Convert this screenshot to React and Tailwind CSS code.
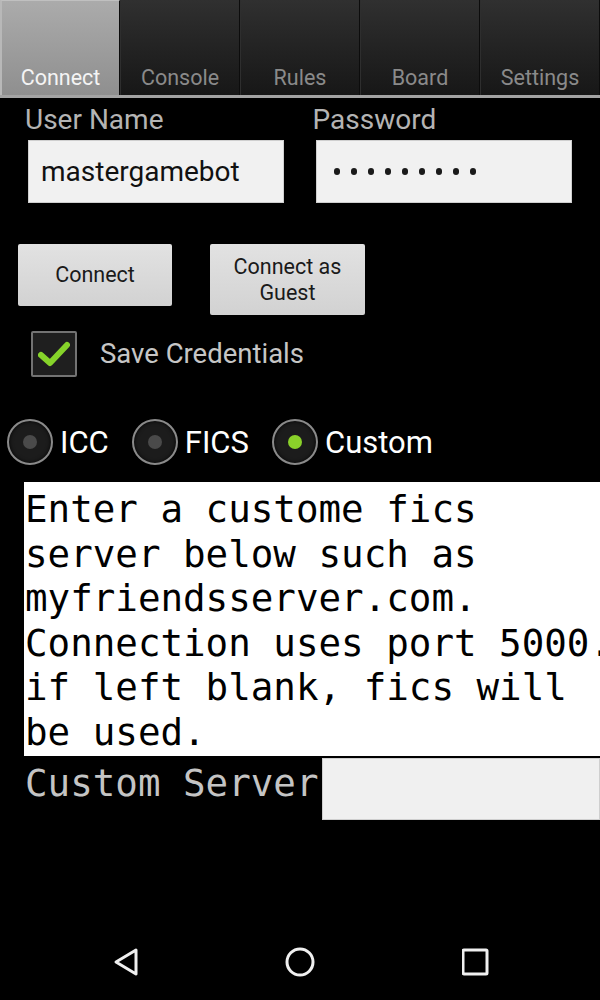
import React from "react";

const sans = { fontFamily: "Roboto, 'Noto Sans', sans-serif" };
const mono = { fontFamily: "'DejaVu Sans Mono', monospace" };

function Tab({ label, active }) {
  return (
    <div
      className={
        "w-[120px] h-[95px] flex items-end justify-center pb-[1px] text-[21.5px] border-r border-[#0c0c0c] " +
        (active
          ? "bg-gradient-to-b from-[#ababab] to-[#8f8f8f] text-[#f4f4f4] border-l-[2px] border-l-[#b8b8b8] border-t border-t-[#c0c0c0]"
          : "bg-gradient-to-b from-[#303030] to-[#171717] text-[#8a8a8a] border-l border-l-[#2e2e2e]")
      }
    >
      {label}
    </div>
  );
}

function Radio({ checked, label, className }) {
  return (
    <div className={"flex items-center " + className}>
      <div className="w-[46px] h-[46px] rounded-full border-[2px] border-[#8a8a8a] bg-[#1c1c1c] flex items-center justify-center shadow-[inset_0_0_4px_rgba(0,0,0,0.9)]">
        <div
          className={
            "w-[14px] h-[14px] rounded-full " +
            (checked ? "bg-[#8ad12a]" : "bg-[#4a4a4a]")
          }
        />
      </div>
      <span className="ml-[7px] text-[31px] text-white leading-none">{label}</span>
    </div>
  );
}

export default function App() {
  return (
    <div className="w-[600px] h-[1000px] bg-black overflow-hidden flex flex-col" style={sans}>
      <div className="flex h-[95px]">
        <Tab label="Connect" active />
        <Tab label="Console" />
        <Tab label="Rules" />
        <Tab label="Board" />
        <Tab label="Settings" />
      </div>
      <div className="h-[3px] bg-[#a3a3a3]" />

      {/* credentials */}
      <div className="flex pl-[25px] pt-[5px]">
        <div className="w-[288px] flex flex-col">
          <div className="text-[28px] leading-[33px] text-[#b4b4b4]">User Name</div>
          <div className="ml-[3px] mt-[4px] w-[256px] h-[63px] bg-[#f1f1f1] border border-[#cfcfcf] flex items-center pl-[12px] text-[28px] text-[#111]">
            mastergamebot
          </div>
        </div>
        <div className="w-[288px] flex flex-col">
          <div className="text-[28px] leading-[33px] text-[#b4b4b4]">Password</div>
          <div className="ml-[3px] mt-[4px] w-[256px] h-[63px] bg-[#f1f1f1] border border-[#cfcfcf] flex items-center pl-[17px] gap-[11px]">
            {Array.from({ length: 9 }).map((_, i) => (
              <div key={i} className="w-[6px] h-[7px] rounded-full bg-[#1a1a1a]" />
            ))}
          </div>
        </div>
      </div>

      {/* buttons */}
      <div className="flex items-start pl-[18px] mt-[41px] gap-[38px]">
        <div className="w-[154px] h-[62px] bg-gradient-to-b from-[#e2e2e2] to-[#d2d2d2] rounded-[2px] flex items-center justify-center text-[21.5px] text-[#1a1a1a]">
          Connect
        </div>
        <div className="w-[155px] h-[71px] bg-gradient-to-b from-[#e2e2e2] to-[#d2d2d2] rounded-[2px] flex items-center justify-center text-center text-[21.5px] leading-[26px] text-[#1a1a1a]">
          Connect as
          <br />
          Guest
        </div>
      </div>

      {/* checkbox */}
      <div className="flex items-center pl-[31px] mt-[16px]">
        <div className="w-[46px] h-[46px] bg-[#1f1f1f] border-[2px] border-[#737373] rounded-[2px] flex items-center justify-center">
          <svg width="32" height="28" viewBox="0 0 32 28">
            <path d="M3 15 L12 23 L29 5" fill="none" stroke="#86d32a" strokeWidth="6" strokeLinecap="round" strokeLinejoin="round" />
          </svg>
        </div>
        <span className="ml-[23px] text-[27.5px] text-[#c6c6c6]">Save Credentials</span>
      </div>

      {/* radios */}
      <div className="flex items-center pl-[7px] mt-[42px]">
        <Radio label="ICC" />
        <Radio label="FICS" className="ml-[23px]" />
        <Radio label="Custom" checked className="ml-[23px]" />
      </div>

      {/* info text */}
      <div
        className="ml-[24px] mt-[17px] w-[600px] shrink-0 bg-white text-black text-[37.5px] leading-[44.5px] pt-[5px] pb-[2px] pl-[1px]"
        style={mono}
      >
        Enter a custome fics server below such as myfriendsserver.com. Connection uses port 5000. if left blank, fics will be used.
      </div>

      {/* custom server */}
      <div className="flex items-start mt-[2px]">
        <div className="pl-[25px] w-[322px] shrink-0 whitespace-nowrap text-[37.5px] leading-[50px] text-[#c4c4c4]" style={mono}>
          Custom Server
        </div>
        <div className="w-[278px] shrink-0 h-[62px] bg-[#f0f0f0] border border-[#cfcfcf]" />
      </div>

      <div className="flex-1" />

      {/* nav bar */}
      <div className="h-[76px] flex items-start justify-between pl-[110px] pr-[110px] pt-[23px]">
        <svg width="28" height="30" viewBox="0 0 28 30">
          <path d="M26 3 L6 15 L26 27 Z" fill="none" stroke="#f0f0f0" strokeWidth="3" strokeLinejoin="round" />
        </svg>
        <svg width="30" height="30" viewBox="0 0 30 30">
          <circle cx="15" cy="15" r="13" fill="none" stroke="#f0f0f0" strokeWidth="3" />
        </svg>
        <svg width="28" height="30" viewBox="0 0 28 30">
          <rect x="1" y="3" width="24" height="24" rx="1" fill="none" stroke="#f0f0f0" strokeWidth="3" />
        </svg>
      </div>
    </div>
  );
}
